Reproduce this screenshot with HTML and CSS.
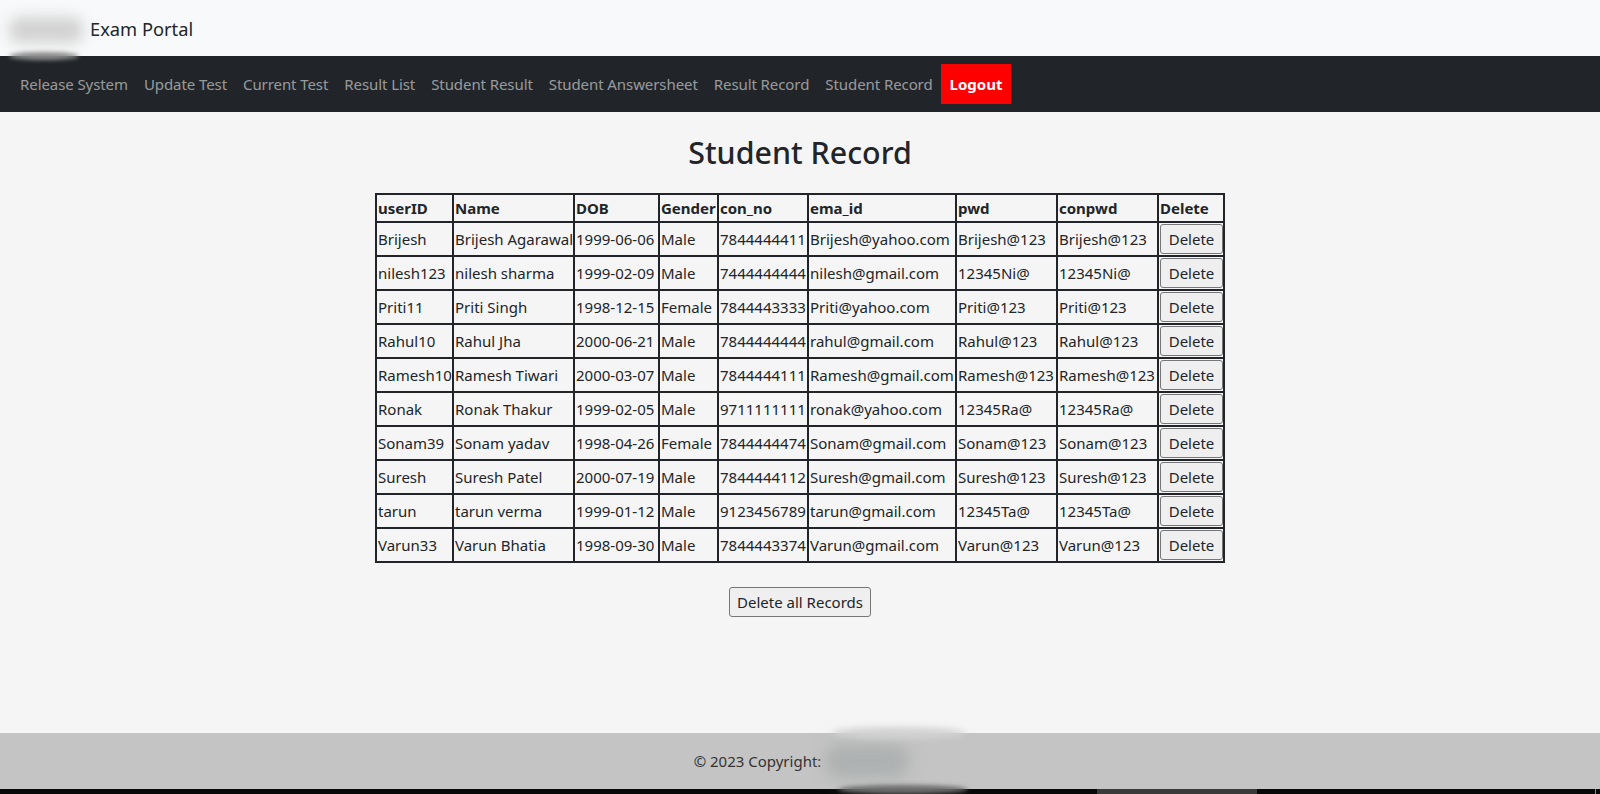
FILE: index.html
```html
<!DOCTYPE html>
<html>
<head>
    <link rel="stylesheet" href="styles.css">
</head>
<body>
    <!-- Brand bar -->
    <header class="brand-bar">
        <div class="brand-logo"></div>
        <div class="brand-smear"></div>
        <span class="brand-name">Exam Portal</span>
    </header>

    <!-- Navigation -->
    <nav class="main-nav">
        <a class="nav-link" href="#">Release System</a>
        <a class="nav-link" href="#">Update Test</a>
        <a class="nav-link" href="#">Current Test</a>
        <a class="nav-link" href="#">Result List</a>
        <a class="nav-link" href="#">Student Result</a>
        <a class="nav-link" href="#">Student Answersheet</a>
        <a class="nav-link" href="#">Result Record</a>
        <a class="nav-link" href="#">Student Record</a>
        <a class="nav-logout" href="#">Logout</a>
    </nav>

    <!-- Records -->
    <main class="content">
        <h1 class="page-title">Student Record</h1>
        <table class="record-table">
            <colgroup>
                <col class="col-user">
                <col class="col-name">
                <col class="col-dob">
                <col class="col-gender">
                <col class="col-phone">
                <col class="col-email">
                <col class="col-pwd">
                <col class="col-conpwd">
                <col class="col-action">
            </colgroup>
            <thead>
                <tr>
                    <th>userID</th><th>Name</th><th>DOB</th><th>Gender</th><th>con_no</th><th>ema_id</th><th>pwd</th><th>conpwd</th><th>Delete</th>
                </tr>
            </thead>
            <tbody>
                <tr><td>Brijesh</td><td>Brijesh Agarawal</td><td>1999-06-06</td><td>Male</td><td>7844444411</td><td>Brijesh@yahoo.com</td><td>Brijesh@123</td><td>Brijesh@123</td><td><button class="btn">Delete</button></td></tr>
                <tr><td>nilesh123</td><td>nilesh sharma</td><td>1999-02-09</td><td>Male</td><td>7444444444</td><td>nilesh@gmail.com</td><td>12345Ni@</td><td>12345Ni@</td><td><button class="btn">Delete</button></td></tr>
                <tr><td>Priti11</td><td>Priti Singh</td><td>1998-12-15</td><td>Female</td><td>7844443333</td><td>Priti@yahoo.com</td><td>Priti@123</td><td>Priti@123</td><td><button class="btn">Delete</button></td></tr>
                <tr><td>Rahul10</td><td>Rahul Jha</td><td>2000-06-21</td><td>Male</td><td>7844444444</td><td>rahul@gmail.com</td><td>Rahul@123</td><td>Rahul@123</td><td><button class="btn">Delete</button></td></tr>
                <tr><td>Ramesh10</td><td>Ramesh Tiwari</td><td>2000-03-07</td><td>Male</td><td>7844444111</td><td>Ramesh@gmail.com</td><td>Ramesh@123</td><td>Ramesh@123</td><td><button class="btn">Delete</button></td></tr>
                <tr><td>Ronak</td><td>Ronak Thakur</td><td>1999-02-05</td><td>Male</td><td>9711111111</td><td>ronak@yahoo.com</td><td>12345Ra@</td><td>12345Ra@</td><td><button class="btn">Delete</button></td></tr>
                <tr><td>Sonam39</td><td>Sonam yadav</td><td>1998-04-26</td><td>Female</td><td>7844444474</td><td>Sonam@gmail.com</td><td>Sonam@123</td><td>Sonam@123</td><td><button class="btn">Delete</button></td></tr>
                <tr><td>Suresh</td><td>Suresh Patel</td><td>2000-07-19</td><td>Male</td><td>7844444112</td><td>Suresh@gmail.com</td><td>Suresh@123</td><td>Suresh@123</td><td><button class="btn">Delete</button></td></tr>
                <tr><td>tarun</td><td>tarun verma</td><td>1999-01-12</td><td>Male</td><td>9123456789</td><td>tarun@gmail.com</td><td>12345Ta@</td><td>12345Ta@</td><td><button class="btn">Delete</button></td></tr>
                <tr><td>Varun33</td><td>Varun Bhatia</td><td>1998-09-30</td><td>Male</td><td>7844443374</td><td>Varun@gmail.com</td><td>Varun@123</td><td>Varun@123</td><td><button class="btn">Delete</button></td></tr>
            </tbody>
        </table>
        <button class="btn btn-all">Delete all Records</button>
    </main>

    <!-- Footer -->
    <footer class="page-footer">
        <span>© 2023 Copyright:</span>
        <div class="footer-blur"></div>
        <div class="footer-smear-top"></div>
        <div class="footer-smear-bottom"></div>
    </footer>

    <!-- Window scrollbar -->
    <div class="scroll-track">
        <div class="scroll-thumb"></div>
        <div class="scroll-mark"></div>
    </div>
</body>
</html>
```

FILE: styles.css
```css
/* Global Styles */
body {
    margin: 0;
    height: 794px;
    display: flex;
    flex-direction: column;
    overflow: hidden;
    font-family: "Noto Sans", "Open Sans", sans-serif;
    font-size: 15px;
    color: #212529;
    background-color: #f5f5f5;
}

/* Brand Bar */
.brand-bar {
    position: relative;
    z-index: 1;
    height: 56px;
    display: flex;
    align-items: center;
    padding-left: 90px;
    background-color: #f8f9fa;
}

.brand-name {
    font-size: 18.3px;
}

.brand-logo {
    position: absolute;
    left: 9px;
    top: 17px;
    width: 74px;
    height: 26px;
    border-radius: 10px;
    background-color: #d2d2d2;
    filter: blur(7px);
}

.brand-smear {
    position: absolute;
    left: 9px;
    top: 52px;
    width: 70px;
    height: 8px;
    border-radius: 50%;
    background-color: #8a8a8a;
    filter: blur(2px);
}

/* Navigation */
.main-nav {
    height: 56px;
    display: flex;
    align-items: center;
    padding-left: 12px;
    background-color: #212529;
}

.nav-link {
    padding: 8px;
    color: rgba(255, 255, 255, 0.55);
    letter-spacing: -0.08px;
    text-decoration: none;
}

.nav-logout {
    padding: 8px 9px;
    height: 24px;
    line-height: 24px;
    background-color: #ff0000;
    color: #ffffff;
    font-weight: 700;
    text-decoration: none;
}

/* Records */
.content {
    flex: 1;
    display: flex;
    flex-direction: column;
    align-items: center;
}

.page-title {
    margin: 18px 0 18px;
    font-size: 30.4px;
    line-height: 45px;
    font-weight: 500;
}

.record-table {
    width: 850px;
    table-layout: fixed;
    border-collapse: collapse;
    border: 2px solid #212529;
}

.record-table th,
.record-table td {
    padding: 0 1px;
    border: 2px solid #212529;
    text-align: left;
    white-space: nowrap;
}

.record-table th {
    height: 26px;
    font-weight: 700;
}

.record-table td {
    height: 32px;
}

.col-user { width: 77px; }
.col-name { width: 121px; }
.col-dob { width: 85px; }
.col-gender { width: 59px; }
.col-phone { width: 90px; }
.col-email { width: 148px; }
.col-pwd { width: 101px; }
.col-conpwd { width: 101px; }
.col-action { width: 66px; }

/* Buttons */
.btn {
    display: block;
    width: 63px;
    height: 30px;
    margin: 0;
    padding: 0;
    font: inherit;
    color: #212529;
    background-color: #efefef;
    border: 1px solid #767676;
    border-radius: 3px;
}

.btn-all {
    width: 142px;
    height: 30px;
    margin-top: 24px;
}

/* Footer */
.page-footer {
    position: relative;
    z-index: 1;
    height: 56px;
    display: flex;
    align-items: center;
    justify-content: center;
    padding-right: 85px;
    background-color: #c4c4c4;
    color: #333333;
}

.footer-blur {
    position: absolute;
    left: 825px;
    top: 11px;
    width: 84px;
    height: 34px;
    border-radius: 14px;
    background-color: #aeb1b1;
    filter: blur(8px);
}

.footer-smear-top {
    position: absolute;
    left: 832px;
    top: -6px;
    width: 134px;
    height: 12px;
    border-radius: 50%;
    background-color: #d2d2d2;
    filter: blur(3px);
}

.footer-smear-bottom {
    position: absolute;
    left: 838px;
    top: 52px;
    width: 130px;
    height: 9px;
    border-radius: 50%;
    background-color: #6e6e6e;
    filter: blur(2px);
}

/* Window scrollbar */
.scroll-track {
    height: 5px;
    display: flex;
    background-color: #080808;
}

.scroll-thumb {
    width: 160px;
    margin-left: 1097px;
    background-color: #3a3a3a;
}

.scroll-mark {
    width: 1px;
    margin-left: 338px;
    background-color: #8a8a8a;
}
```
